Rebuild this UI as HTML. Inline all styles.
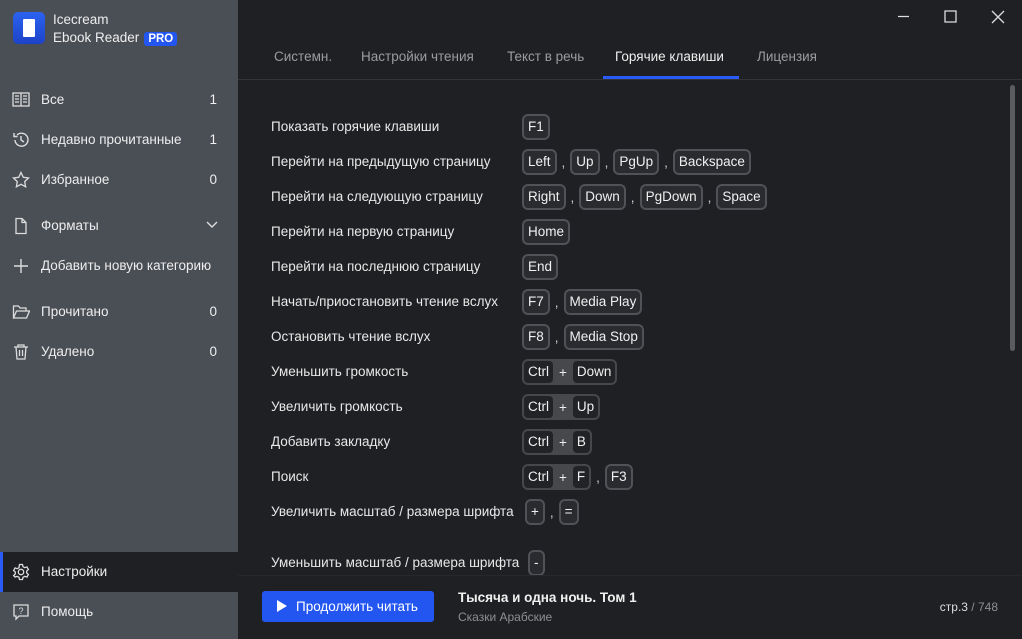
<!DOCTYPE html><html><head><meta charset="utf-8"><style>
*{box-sizing:border-box;margin:0;padding:0}
body{width:1022px;height:639px;overflow:hidden;background:#1f2023;font-family:"Liberation Sans","DejaVu Sans",sans-serif;color:#e6e6e6;font-size:13.5px;position:relative}
.sb{position:absolute;left:0;top:0;width:238px;height:639px;background:#4a4e55}
.logo{position:absolute;left:13px;top:12px;width:32px;height:32px;border-radius:5px;background:linear-gradient(#2b63f0,#1d43c8)}
.logo i{position:absolute;left:10px;top:7px;width:12px;height:18px;background:#fff;border-radius:1px}
.t1{position:absolute;left:53px;top:12px;font-size:13.5px;color:#eee}
.t2{position:absolute;left:53px;top:30px;font-size:13.5px;color:#eee}
.pro{display:inline-block;background:#2356f0;color:#fff;font-weight:bold;font-size:11.5px;padding:1px 4px;border-radius:3px;margin-left:5px}
.it{position:absolute;left:0;width:238px;height:40px;line-height:40px;padding-left:41px;font-size:13.5px;color:#eee}
.it .n{position:absolute;right:21px;top:0}
.it svg{position:absolute;left:12px;top:11px}
.act{background:#1f2023;border-left:3px solid #2a5cf5}
.tabs{position:absolute;left:238px;top:40px;right:0;height:40px;border-bottom:1px solid #333438}
.tab{position:absolute;top:9px;color:#9a9ca0;font-size:13.5px}
.tab.a{color:#eee}
.ul{position:absolute;left:603px;top:76px;width:136px;height:3px;background:#2a5cf5}
.row{position:absolute;left:271px;height:26px;line-height:26px;font-size:13.5px;color:#e8e8e8}
.keys{position:absolute;left:522px;height:26px;display:flex;align-items:center;font-size:13.5px}
.k{display:inline-block;height:26px;line-height:22px;padding:0 4px;border:2px solid #505257;border-radius:6px;background:#2a2b2f;color:#f0f0f0}
.sep{padding:0 5px;color:#ccc}
.c{display:inline-flex;height:26px;border:2px solid #47484c;background:#47484c;border-radius:6px;align-items:center}
.c b{font-weight:normal;background:#222326;border-radius:4px;height:22px;line-height:22px;padding:0 4px;color:#f0f0f0}
.c em{font-style:normal;padding:0 6px;color:#eee}
.bot{position:absolute;left:238px;top:575px;right:0;bottom:0;background:#1f2023;border-top:1px solid #27282b}
.btn{position:absolute;left:262px;top:591px;width:172px;height:31px;background:#2356f0;border-radius:3px;color:#fff;font-size:13.5px;line-height:31px;padding-left:34px}
.btn:before{content:"";position:absolute;left:15px;top:9px;border-left:10px solid #fff;border-top:6.5px solid transparent;border-bottom:6.5px solid transparent}
.scr{position:absolute;left:1010px;top:85px;width:5px;height:266px;background:#5a5c60;border-radius:3px}
</style></head><body>
<div class="sb">
<div class="logo"><i></i></div>
<div class="t1">Icecream</div>
<div class="t2">Ebook Reader<span class="pro">PRO</span></div>
<div class="it" style="top:80px"><svg width="18" height="18" fill="none" stroke="#ddd" stroke-width="1.3"><rect x="1" y="2" width="16" height="13"/><path d="M9 2v13M3 5h4M3 8h4M3 11h4M11 5h4M11 8h4M11 11h4"/></svg>Все<span class="n">1</span></div>
<div class="it" style="top:120px"><svg width="18" height="18" fill="none" stroke="#ddd" stroke-width="1.4"><path d="M3 9a6.5 6.5 0 1 0 2-5M2 2v3.5h3.5M9 5v4l3 2"/></svg>Недавно прочитанные<span class="n">1</span></div>
<div class="it" style="top:160px"><svg width="18" height="18" fill="none" stroke="#ddd" stroke-width="1.3"><path d="M9 1.5l2.3 4.8 5.2.7-3.8 3.6.9 5.2L9 13.3l-4.6 2.5.9-5.2L1.5 7l5.2-.7z"/></svg>Избранное<span class="n">0</span></div>
<div class="it" style="top:206px"><svg width="18" height="18" fill="none" stroke="#ddd" stroke-width="1.3"><path d="M4 1.5h6l4 4v11H4zM10 1.5v4h4"/></svg>Форматы<svg style="left:206px;top:15px" width="12" height="8" fill="none" stroke="#ddd" stroke-width="1.4"><path d="M1 1l5 5 5-5"/></svg></div>
<div class="it" style="top:246px"><svg width="18" height="18" fill="none" stroke="#ddd" stroke-width="1.4"><path d="M9 2v14M2 9h14"/></svg>Добавить новую категорию</div>
<div class="it" style="top:292px"><svg width="18" height="18" fill="none" stroke="#ddd" stroke-width="1.3"><path d="M1.5 15V3h5l1.5 2h6v3M1.5 15l3-7h13l-3 7z"/></svg>Прочитано<span class="n">0</span></div>
<div class="it" style="top:332px"><svg width="18" height="18" fill="none" stroke="#ddd" stroke-width="1.3"><path d="M2 4h14M6 4V2h6v2M4 4l1 12h8l1-12M7.5 7v6M10.5 7v6"/></svg>Удалено<span class="n">0</span></div>
<div class="it act" style="top:552px;padding-left:38px"><svg style="left:9px" width="18" height="18" fill="none" stroke="#ddd" stroke-width="1.3"><circle cx="9" cy="9" r="2.7"/><path d="M7.5 1.5h3l.5 2.2 1.8 1 2.1-.8 1.5 2.6-1.7 1.5v2l1.7 1.5-1.5 2.6-2.1-.8-1.8 1-.5 2.2h-3l-.5-2.2-1.8-1-2.1.8L1.6 12.5 3.3 11V9L1.6 7.5 3.1 4.9l2.1.8 1.8-1z"/></svg>Настройки</div>
<div class="it" style="top:592px"><svg width="18" height="18" fill="none" stroke="#ddd" stroke-width="1.3"><path d="M2 2h14v11H7l-3 3v-3H2z"/><text x="6.5" y="11" font-size="9" fill="#ddd" stroke="none">?</text></svg>Помощь</div>
</div>
<svg style="position:absolute;left:895px;top:9px" width="120" height="16" fill="none" stroke="#ddd" stroke-width="1.3"><path d="M3 7.5h11M50 2h11v11H50zM97 2l12 12M109 2L97 14"/></svg>
<div class="tabs">
<span class="tab" style="left:36px">Системн.</span>
<span class="tab" style="left:123px">Настройки чтения</span>
<span class="tab" style="left:269px">Текст в речь</span>
<span class="tab a" style="left:377px">Горячие клавиши</span>
<span class="tab" style="left:519px">Лицензия</span>
</div>
<div class="ul"></div>

<div class="row" style="top:114px">Показать горячие клавиши</div><div class="keys" style="top:114px"><span class="k">F1</span></div>
<div class="row" style="top:149px">Перейти на предыдущую страницу</div><div class="keys" style="top:149px"><span class="k">Left</span><span class="sep">,</span><span class="k">Up</span><span class="sep">,</span><span class="k">PgUp</span><span class="sep">,</span><span class="k">Backspace</span></div>
<div class="row" style="top:184px">Перейти на следующую страницу</div><div class="keys" style="top:184px"><span class="k">Right</span><span class="sep">,</span><span class="k">Down</span><span class="sep">,</span><span class="k">PgDown</span><span class="sep">,</span><span class="k">Space</span></div>
<div class="row" style="top:219px">Перейти на первую страницу</div><div class="keys" style="top:219px"><span class="k">Home</span></div>
<div class="row" style="top:254px">Перейти на последнюю страницу</div><div class="keys" style="top:254px"><span class="k">End</span></div>
<div class="row" style="top:289px">Начать/приостановить чтение вслух</div><div class="keys" style="top:289px"><span class="k">F7</span><span class="sep">,</span><span class="k">Media Play</span></div>
<div class="row" style="top:324px">Остановить чтение вслух</div><div class="keys" style="top:324px"><span class="k">F8</span><span class="sep">,</span><span class="k">Media Stop</span></div>
<div class="row" style="top:359px">Уменьшить громкость</div><div class="keys" style="top:359px"><span class="c"><b>Ctrl</b><em>+</em><b>Down</b></span></div>
<div class="row" style="top:394px">Увеличить громкость</div><div class="keys" style="top:394px"><span class="c"><b>Ctrl</b><em>+</em><b>Up</b></span></div>
<div class="row" style="top:429px">Добавить закладку</div><div class="keys" style="top:429px"><span class="c"><b>Ctrl</b><em>+</em><b>B</b></span></div>
<div class="row" style="top:464px">Поиск</div><div class="keys" style="top:464px"><span class="c"><b>Ctrl</b><em>+</em><b>F</b></span><span class="sep">,</span><span class="k">F3</span></div>
<div class="row" style="top:499px">Увеличить масштаб / размера шрифта</div><div class="keys" style="top:499px;left:525px"><span class="k">+</span><span class="sep">,</span><span class="k">=</span></div>
<div class="row" style="top:550px">Уменьшить масштаб / размера шрифта</div><div class="keys" style="top:550px;left:528px"><span class="k">-</span></div>
<div class="scr"></div>
<div class="bot"></div>
<div class="btn">Продолжить читать</div>
<div style="position:absolute;left:458px;top:590px;font-weight:bold;font-size:13.5px;color:#f0f0f0">Тысяча и одна ночь. Том 1</div>
<div style="position:absolute;left:458px;top:610px;font-size:12px;color:#8d8f93">Сказки Арабские</div>
<div style="position:absolute;right:24px;top:600px;font-size:12px;color:#ddd">стр.3 <span style="color:#8d8f93">/ 748</span></div>
</body></html>
